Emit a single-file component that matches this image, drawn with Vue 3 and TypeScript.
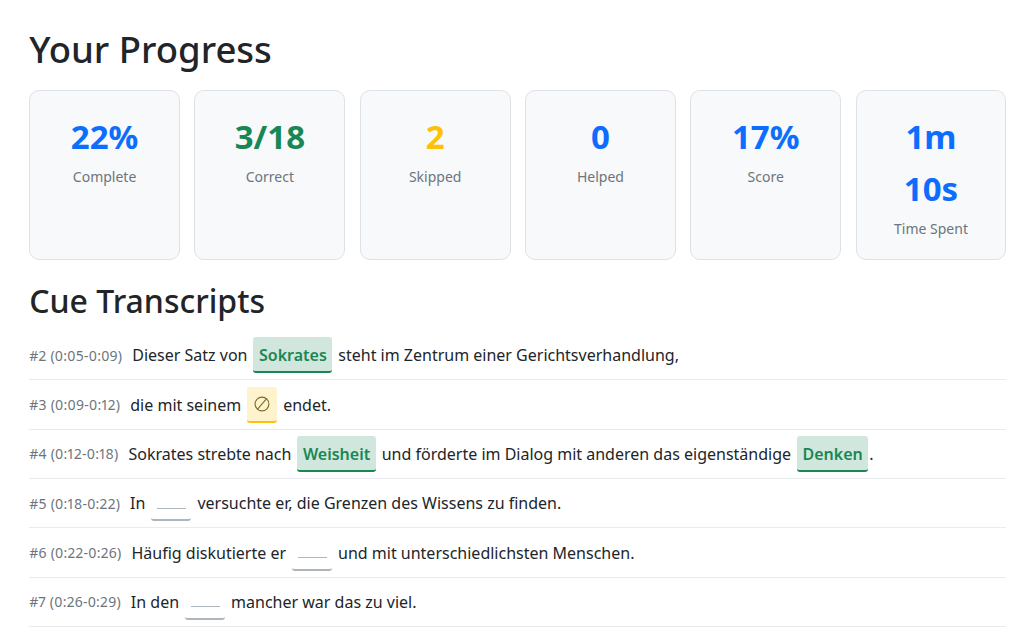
<script setup lang="ts">
interface Stat { value: string; label: string; color: string }
type Part = { t: 'text'; v: string } | { t: 'ok'; v: string } | { t: 'skip' } | { t: 'blank' }
interface Row { id: string; parts: Part[] }
const stats: Stat[] = [
  { value: '22%', label: 'Complete', color: 'blue' },
  { value: '3/18', label: 'Correct', color: 'green' },
  { value: '2', label: 'Skipped', color: 'yellow' },
  { value: '0', label: 'Helped', color: 'blue' },
  { value: '17%', label: 'Score', color: 'blue' },
  { value: '1m 10s', label: 'Time Spent', color: 'blue' },
]
const rows: Row[] = [
  { id: '#2 (0:05-0:09)', parts: [{ t: 'text', v: 'Dieser Satz von' }, { t: 'ok', v: 'Sokrates' }, { t: 'text', v: 'steht im Zentrum einer Gerichtsverhandlung,' }] },
  { id: '#3 (0:09-0:12)', parts: [{ t: 'text', v: 'die mit seinem' }, { t: 'skip' }, { t: 'text', v: 'endet.' }] },
  { id: '#4 (0:12-0:18)', parts: [{ t: 'text', v: 'Sokrates strebte nach' }, { t: 'ok', v: 'Weisheit' }, { t: 'text', v: 'und förderte im Dialog mit anderen das eigenständige' }, { t: 'ok', v: 'Denken' }, { t: 'text', v: '.' }] },
  { id: '#5 (0:18-0:22)', parts: [{ t: 'text', v: 'In' }, { t: 'blank' }, { t: 'text', v: 'versuchte er, die Grenzen des Wissens zu finden.' }] },
  { id: '#6 (0:22-0:26)', parts: [{ t: 'text', v: 'Häufig diskutierte er' }, { t: 'blank' }, { t: 'text', v: 'und mit unterschiedlichsten Menschen.' }] },
  { id: '#7 (0:26-0:29)', parts: [{ t: 'text', v: 'In den' }, { t: 'blank' }, { t: 'text', v: 'mancher war das zu viel.' }] },
]
</script>

<template>
  <main class="page">
    <h1 class="title">Your Progress</h1>
    <section class="stats">
      <div v-for="s in stats" :key="s.label" class="card">
        <div class="value" :class="s.color">{{ s.value }}</div>
        <div class="label">{{ s.label }}</div>
      </div>
    </section>
    <h2 class="subtitle">Cue Transcripts</h2>
    <section>
      <div v-for="r in rows" :key="r.id" class="row">
        <span class="id">{{ r.id }}</span>
        <template v-for="(p, i) in r.parts" :key="i">
          <span v-if="p.t === 'text'" class="text" :class="{ tight: p.v === '.' }">{{ p.v }}</span>
          <span v-else-if="p.t === 'ok'" class="chip ok">{{ p.v }}</span>
          <span v-else-if="p.t === 'skip'" class="chip skip">
            <svg width="16" height="16" viewBox="0 0 16 16" fill="none" stroke="#7d6a2a" stroke-width="1.1">
              <circle cx="8" cy="8" r="6.9" />
              <path d="M3.4 13.4 12.6 2.6" />
            </svg>
          </span>
          <span v-else class="chip blank"><span class="line"></span></span>
        </template>
      </div>
    </section>
  </main>
</template>

<style scoped>
.page {
  box-sizing: border-box;
  width: 1024px;
  height: 637px;
  overflow: hidden;
  padding: 24px 17.6px 0 29.2px;
  font-family: "Noto Sans", "Open Sans", sans-serif;
  color: #212529;
  background: #fff;
}
.title {
  margin: 0;
  font-size: 36.5px;
  line-height: 50px;
  font-weight: 500;
}
.stats {
  display: grid;
  grid-template-columns: repeat(6, 1fr);
  gap: 14.5px;
  margin-top: 16px;
}
.card {
  box-sizing: border-box;
  height: 170px;
  padding: 20px 20px 0;
  background: #f8f9fa;
  border: 1px solid #dee2e6;
  border-radius: 10px;
  text-align: center;
}
.value {
  font-size: 33px;
  line-height: 52px;
  font-weight: 700;
}
.blue { color: #0d6efd; }
.green { color: #198754; }
.yellow { color: #ffc107; }
.label {
  margin-top: 4px;
  font-size: 14px;
  line-height: 20px;
  color: #6c757d;
}
.subtitle {
  margin: 19px 0 0;
  font-size: 32px;
  line-height: 44px;
  font-weight: 500;
}
.row {
  box-sizing: border-box;
  height: 49.35px;
  display: flex;
  align-items: center;
  gap: 5px;
  border-bottom: 1px solid #e9ecef;
  font-size: 16px;
}
.row:first-child { margin-top: 8px; }
.id {
  font-size: 14px;
  letter-spacing: 0.25px;
  font-weight: 400;
  font-variant-numeric: proportional-nums;
  color: #6c757d;
  margin-right: 5px;
}
.text { color: #212529; white-space: nowrap; }
.tight { margin-left: -5px; }
.chip {
  box-sizing: border-box;
  height: 36px;
  margin: 0 1px;
  display: inline-flex;
  align-items: center;
  justify-content: center;
  border-radius: 3px;
  border-bottom: 2px solid transparent;
}
.ok {
  padding: 2px 5.5px 0;
  background: #d1e7dd;
  border-bottom-color: #198754;
  color: #198754;
  font-weight: 600;
}
.skip {
  width: 30px;
  background: #fff3cd;
  border-bottom-color: #ffc107;
}
.blank {
  width: 40px;
  border-bottom-color: #adb5bd;
}
.line {
  display: block;
  width: 29px;
  height: 1px;
  margin-top: 12px;
  background: #adb5bd;
}
</style>
